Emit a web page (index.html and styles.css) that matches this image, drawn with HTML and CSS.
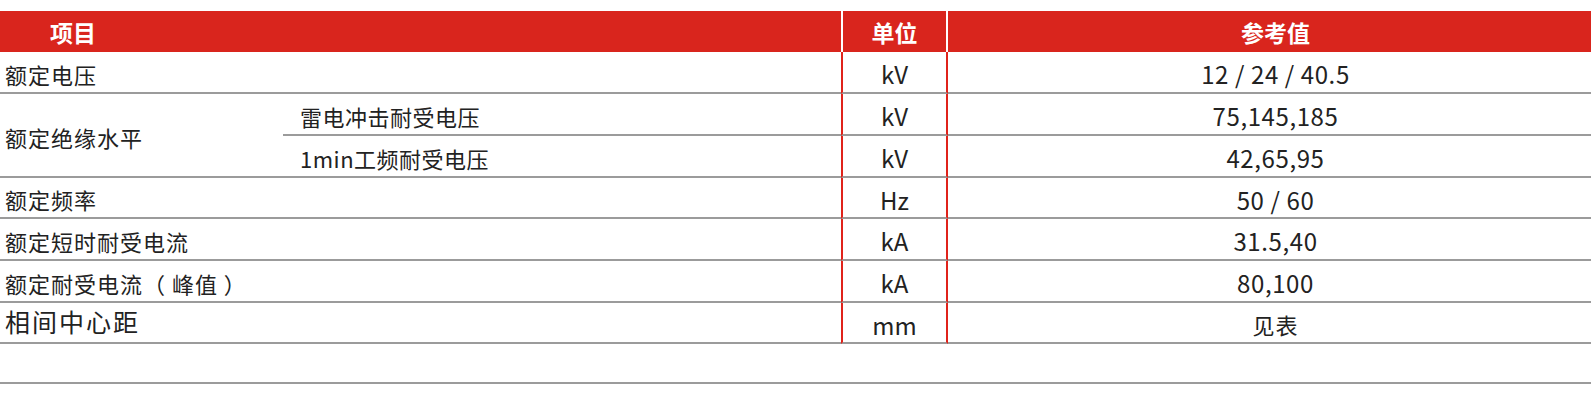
FILE: index.html
```html
<!DOCTYPE html>
<html lang="zh-CN">
<head>
<meta charset="utf-8">
<title>参数表</title>
<link rel="stylesheet" href="styles.css">
</head>
<body>
<div class="spec">
  <div class="hd hd-item">项目</div>
  <div class="hd hd-unit">单位</div>
  <div class="hd hd-val">参考值</div>

  <div class="c name span2 r1">额定电压</div>
  <div class="c unit r1">kV</div>
  <div class="c val r1">12 / 24 / 40.5</div>

  <div class="c name group">额定绝缘水平</div>
  <div class="c sub r2">雷电冲击耐受电压</div>
  <div class="c unit r2">kV</div>
  <div class="c val r2">75,145,185</div>
  <div class="c sub r3">1min工频耐受电压</div>
  <div class="c unit r3">kV</div>
  <div class="c val r3">42,65,95</div>

  <div class="c name span2 r4">额定频率</div>
  <div class="c unit r4">Hz</div>
  <div class="c val r4">50 / 60</div>

  <div class="c name span2 r5">额定短时耐受电流</div>
  <div class="c unit r5">kA</div>
  <div class="c val r5">31.5,40</div>

  <div class="c name span2 r6">额定耐受电流（ 峰值 ）</div>
  <div class="c unit r6">kA</div>
  <div class="c val r6">80,100</div>

  <div class="c name span2 big r7">相间中心距</div>
  <div class="c unit r7">mm</div>
  <div class="c val r7">见表</div>

  <div class="c blank"></div>
</div>
</body>
</html>
```
FILE: styles.css
```css
html, body {
  margin: 0;
  padding: 0;
  background: #ffffff;
}
body {
  padding-top: 11px;
  font-family: "Noto Sans CJK SC", "Noto Sans", sans-serif;
  color: #222222;
}
.spec {
  display: grid;
  grid-template-columns: 283px 558px 107px 1fr;
  grid-template-rows: 41px 42px 42px 42px 41px 42px 42px 41px 40px;
}
.hd {
  background: #d9251d;
  color: #ffffff;
  font-weight: 700;
  font-size: 23px;
  display: flex;
  align-items: center;
  grid-row: 1;
}
.hd-item {
  grid-column: 1 / 3;
  padding-left: 50px;
}
.hd-unit {
  grid-column: 3;
  justify-content: center;
  border-left: 2px solid #ffffff;
  border-right: 2px solid #ffffff;
}
.hd-val {
  grid-column: 4;
  justify-content: center;
  padding-left: 12px;
}
.c {
  display: flex;
  align-items: center;
  border-bottom: 2px solid #9b9b9b;
  font-size: 22px;
  padding-top: 3px;
  box-sizing: border-box;
}
.name {
  grid-column: 1;
  padding-left: 5px;
  letter-spacing: 1px;
}
.span2 { grid-column: 1 / 3; }
.big { font-size: 25px; letter-spacing: 2px; padding-top: 0; padding-bottom: 4px; }
.group { grid-row: 3 / 5; }
.sub {
  grid-column: 2;
  padding-left: 17px;
  letter-spacing: 0.5px;
}
.unit {
  grid-column: 3;
  justify-content: center;
  border-left: 2px solid #e0231b;
  border-right: 2px solid #e0231b;
  font-size: 24px;
}
.val {
  grid-column: 4;
  justify-content: center;
  padding-left: 12px;
  font-size: 24px;
  letter-spacing: 0.6px;
}
.r1 { grid-row: 2; }
.r2 { grid-row: 3; }
.r3 { grid-row: 4; }
.r4 { grid-row: 5; }
.r5 { grid-row: 6; }
.r6 { grid-row: 7; }
.r7 { grid-row: 8; }
.val.r7 { font-size: 22px; letter-spacing: 1px; }
.blank { grid-column: 1 / 5; grid-row: 9; }
```
